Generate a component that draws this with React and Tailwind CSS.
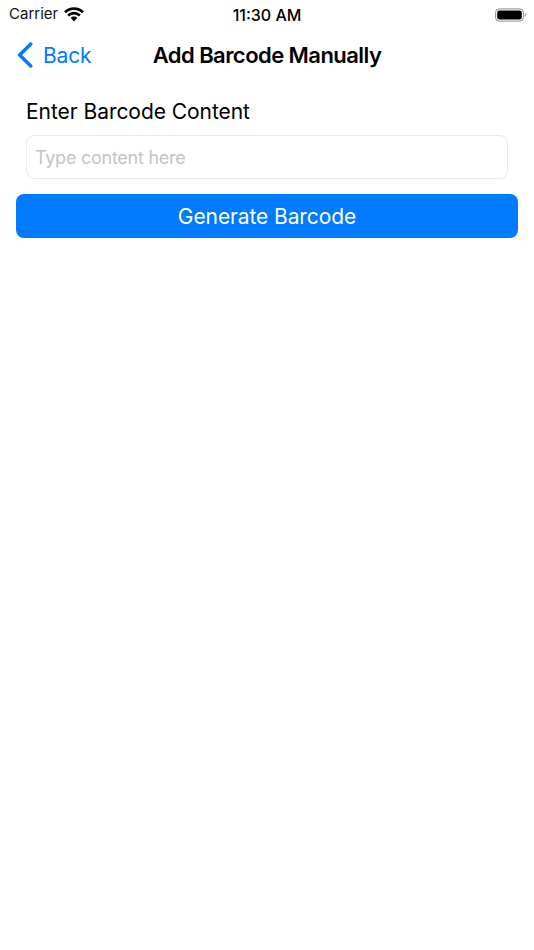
import React from "react";

const WifiIcon = () => (
  <svg width="20" height="15" viewBox="0 0 20 15" fill="none" stroke="#000" strokeWidth="2.700" className="mt-[-1px]">
    <path d="M1 5.300C3.400 3 6.500 1.600 10 1.600s6.600 1.400 9 3.700" />
    <path d="M4.100 8.600C5.700 7.100 7.700 6.100 10 6.100s4.300 1 5.900 2.500" />
    <path d="M10 9.600c-1.300 0-2.400.5-3.200 1.300L10 14.400l3.200-3.500C12.400 10.100 11.300 9.600 10 9.600z" fill="#000" stroke="none" />
  </svg>
);

const BatteryIcon = () => (
  <svg width="32" height="14" viewBox="0 0 32 14">
    <rect x="0.600" y="0.900" width="27.800" height="12.200" rx="3.600" fill="none" stroke="#8e8e8e" strokeWidth="1" />
    <rect x="2.200" y="2.500" width="24.600" height="9" rx="2.300" fill="#000" />
    <path d="M29.800 5v4c.8-.3 1.300-1.100 1.300-2s-.5-1.700-1.300-2z" fill="#9a9a9a" />
  </svg>
);

const App = () => {
  return (
    <div className="w-[534px] h-[950px] bg-white overflow-hidden font-['Inter','Liberation_Sans',sans-serif]">
      {/* STATUS BAR */}
      <div className="h-[28px] flex items-center justify-between pl-[9px] pr-[7px] pt-[1px] relative">
        <div className="flex items-center gap-[6px]">
          <span className="text-[15px] text-[#111]">Carrier</span>
          <WifiIcon />
        </div>
        <span className="absolute left-0 right-0 text-center text-[16px] font-medium text-black">
          11:30 AM
        </span>
        <BatteryIcon />
      </div>

      {/* NAV BAR */}
      <div className="h-[54px] flex items-center relative">
        <div className="flex items-center pl-[17px] gap-[10px] text-[#007aff]">
          <svg width="16" height="26" viewBox="0 0 16 26" fill="none" stroke="#007aff" strokeWidth="3.400" strokeLinecap="round" strokeLinejoin="round">
            <path d="M13.800 2 2.600 13l11.200 11" />
          </svg>
          <span className="text-[21px] tracking-[-0.2px] pt-[1px]">Back</span>
        </div>
        <h1 className="absolute left-0 right-0 text-center text-[22px] font-semibold text-black tracking-[-0.55px]">
          Add Barcode Manually
        </h1>
      </div>

      {/* FORM */}
      <div className="flex flex-col px-[16px] pt-[16px]">
        <div className="px-[10px]">
          <label className="block text-[21px] leading-[32px] text-black tracking-[-0.05px] mt-[-2px]">
            Enter Barcode Content
          </label>
          <input
            placeholder="Type content here"
            className="w-full h-[44px] mt-[7px] px-[8px] rounded-[8px] border border-[#e9e9e9] text-[18px] tracking-[-0.25px] outline-none placeholder:text-[#c4c4c6]"
          />
        </div>
        <button className="h-[44px] mt-[15px] pt-[2px] rounded-[8px] bg-[#007aff] text-white text-[21px] tracking-[-0.1px]">
          Generate Barcode
        </button>
      </div>
    </div>
  );
};

export default App;
